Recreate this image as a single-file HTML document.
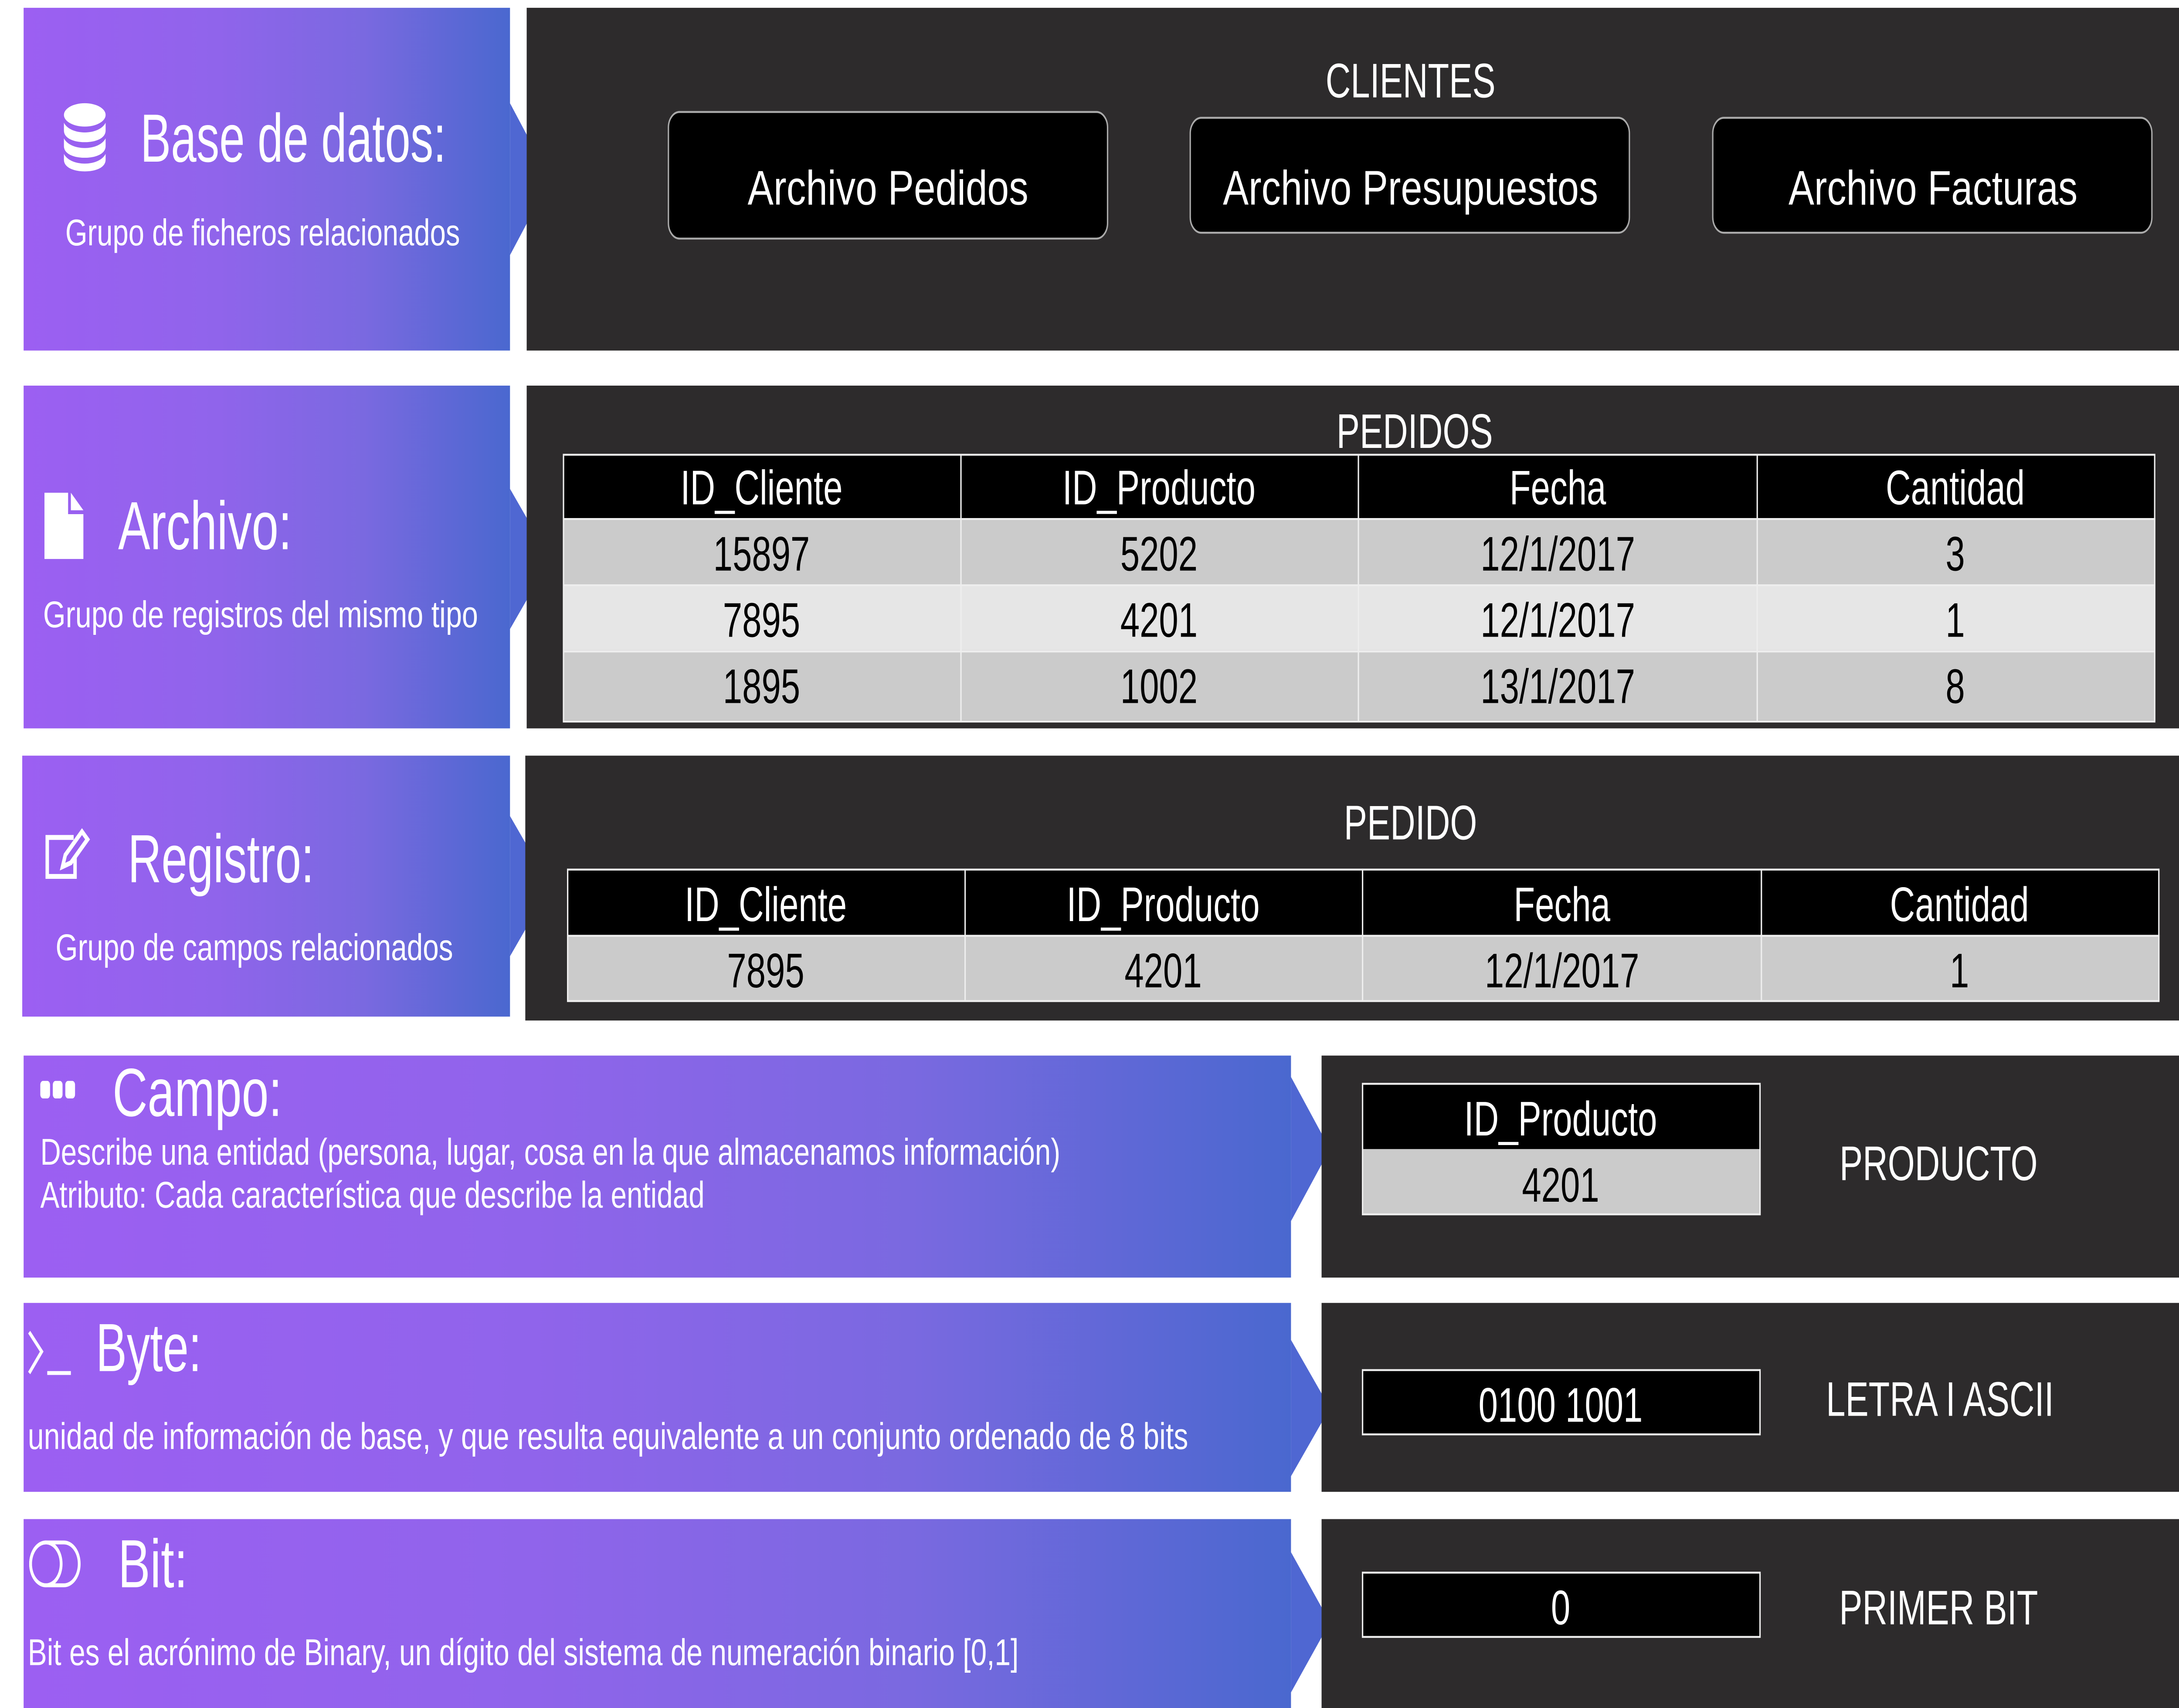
<!DOCTYPE html>
<html><head><meta charset="utf-8"><style>
html,body{margin:0;padding:0;background:#fff;overflow:hidden;width:100vw;height:100vh}
svg{display:block;position:fixed;left:0;top:0;width:100vw;height:100vh}
text{font-family:"Liberation Sans",sans-serif;fill:#fff}
.c{text-anchor:middle;font-size:25px}
.k{fill:#000}
</style></head><body>
<svg viewBox="0 0 1568 877" preserveAspectRatio="none" xmlns="http://www.w3.org/2000/svg">
<defs>
<linearGradient id="g" x1="0" y1="0" x2="1" y2="0">
<stop offset="0" stop-color="#9c5ff2"/><stop offset="0.4" stop-color="#9064eb"/><stop offset="0.7" stop-color="#7a69e0"/><stop offset="1" stop-color="#4a68cf"/>
</linearGradient>
</defs>
<rect width="1568" height="877" fill="#fff"/>

<!-- Row1 -->
<rect x="17" y="4" width="350" height="176" fill="url(#g)"/>
<polygon points="367,53 396,92 367,131" fill="#4f67d2"/>
<rect x="379" y="4" width="1189" height="176" fill="#2d2b2c"/>
<g fill="#fff"><ellipse cx="61" cy="59" rx="15" ry="6"/><path d="M46 63v4c0 4 7 6 15 6s15-2 15-6v-4c-2 3-8 5-15 5S48 66 46 63z"/><path d="M46 71v4c0 4 7 6 15 6s15-2 15-6v-4c-2 3-8 5-15 5S48 74 46 71z"/><path d="M46 79v3c0 4 7 6 15 6s15-2 15-6v-3c-2 3-8 5-15 5S48 82 46 79z"/></g>
<text x="101" y="83" font-size="35" textLength="220" lengthAdjust="spacingAndGlyphs">Base de datos:</text>
<text x="47" y="126" font-size="19" textLength="284" lengthAdjust="spacingAndGlyphs">Grupo de ficheros relacionados</text>
<text x="1015" y="50" class="c" font-size="24">CLIENTES</text>
<rect x="481" y="57.5" width="316" height="65" rx="8" fill="#000" stroke="#aaa"/>
<text x="639" y="105" class="c" textLength="202" lengthAdjust="spacingAndGlyphs">Archivo Pedidos</text>
<rect x="856.5" y="60.5" width="316" height="59" rx="8" fill="#000" stroke="#aaa"/>
<text x="1015" y="105" class="c" textLength="270" lengthAdjust="spacingAndGlyphs">Archivo Presupuestos</text>
<rect x="1232.5" y="60.5" width="316" height="59" rx="8" fill="#000" stroke="#aaa"/>
<text x="1391" y="105" class="c" textLength="208" lengthAdjust="spacingAndGlyphs">Archivo Facturas</text>

<!-- Row2 -->
<rect x="17" y="198" width="350" height="176" fill="url(#g)"/>
<polygon points="367,251 396,287 367,323" fill="#4f67d2"/>
<rect x="379" y="198" width="1189" height="176" fill="#2d2b2c"/>
<path fill="#fff" d="M32 253h17v11h11v23H32z M51 253l9 9h-9z"/>
<text x="85" y="282" font-size="35" textLength="125" lengthAdjust="spacingAndGlyphs">Archivo:</text>
<text x="31" y="322" font-size="19" textLength="313" lengthAdjust="spacingAndGlyphs">Grupo de registros del mismo tipo</text>
<text x="1018" y="230" class="c" font-size="24">PEDIDOS</text>
<rect x="405" y="233" width="1146" height="33" fill="#000"/>
<rect x="405" y="266" width="1146" height="34" fill="#cbcbcb"/>
<rect x="405" y="300" width="1146" height="34" fill="#e6e6e6"/>
<rect x="405" y="334" width="1146" height="36" fill="#cbcbcb"/>
<g stroke="#eee" stroke-width="1"><path d="M405.5 233v137M691.5 233v137M977.5 233v137M1264.5 233v137M1550.5 233v137M405 233.5h1146M405 266.5h1146M405 300.5h1146M405 334.5h1146M405 370.5h1146"/></g>
<text x="548" y="259" class="c">ID_Cliente</text><text x="834" y="259" class="c">ID_Producto</text><text x="1121" y="259" class="c">Fecha</text><text x="1407" y="259" class="c">Cantidad</text>
<text x="548" y="293" class="c k">15897</text><text x="834" y="293" class="c k">5202</text><text x="1121" y="293" class="c k">12/1/2017</text><text x="1407" y="293" class="c k">3</text>
<text x="548" y="327" class="c k">7895</text><text x="834" y="327" class="c k">4201</text><text x="1121" y="327" class="c k">12/1/2017</text><text x="1407" y="327" class="c k">1</text>
<text x="548" y="361" class="c k">1895</text><text x="834" y="361" class="c k">1002</text><text x="1121" y="361" class="c k">13/1/2017</text><text x="1407" y="361" class="c k">8</text>

<!-- Row3 -->
<rect x="16" y="388" width="351" height="134" fill="url(#g)"/>
<polygon points="367,419 396,455 367,491" fill="#4f67d2"/>
<rect x="378" y="388" width="1190" height="136" fill="#2d2b2c"/>
<g fill="none" stroke="#fff" stroke-width="2.5"><path d="M53 430H34v20h20V440"/><path d="M45 445l2-6 12-12 4 4-12 12z"/></g>
<text x="92" y="453" font-size="35" textLength="134" lengthAdjust="spacingAndGlyphs">Registro:</text>
<text x="40" y="493" font-size="19" textLength="286" lengthAdjust="spacingAndGlyphs">Grupo de campos relacionados</text>
<text x="1015" y="431" class="c" font-size="24">PEDIDO</text>
<rect x="408" y="446" width="1146" height="34" fill="#000"/>
<rect x="408" y="480" width="1146" height="34" fill="#cbcbcb"/>
<g stroke="#eee"><path d="M408.5 446v68M694.5 446v68M980.5 446v68M1267.5 446v68M1553.5 446v68M408 446.5h1146M408 480.5h1146M408 514h1146"/></g>
<text x="551" y="473" class="c">ID_Cliente</text><text x="837" y="473" class="c">ID_Producto</text><text x="1124" y="473" class="c">Fecha</text><text x="1410" y="473" class="c">Cantidad</text>
<text x="551" y="507" class="c k">7895</text><text x="837" y="507" class="c k">4201</text><text x="1124" y="507" class="c k">12/1/2017</text><text x="1410" y="507" class="c k">1</text>

<!-- Row4 -->
<rect x="17" y="542" width="912" height="114" fill="url(#g)"/>
<polygon points="929,553 957,590 929,627" fill="#4f67d2"/>
<rect x="951" y="542" width="617" height="114" fill="#2d2b2c"/>
<g fill="#fff"><rect x="29" y="555" width="7" height="9" rx="2"/><rect x="38" y="555" width="7" height="9" rx="2"/><rect x="47" y="555" width="7" height="9" rx="2"/></g>
<text x="81" y="573" font-size="35" textLength="122" lengthAdjust="spacingAndGlyphs">Campo:</text>
<text x="29" y="598" font-size="19" textLength="734" lengthAdjust="spacingAndGlyphs">Describe una entidad (persona, lugar, cosa en la que almacenamos información)</text>
<text x="29" y="620" font-size="19" textLength="478" lengthAdjust="spacingAndGlyphs">Atributo: Cada característica que describe la entidad</text>
<rect x="980" y="556" width="287" height="34" fill="#000"/>
<rect x="980" y="590" width="287" height="34" fill="#cbcbcb"/>
<rect x="980.5" y="556.5" width="286" height="67" fill="none" stroke="#eee"/>
<text x="1123" y="583" class="c">ID_Producto</text>
<text x="1123" y="617" class="c k">4201</text>
<text x="1395" y="606" class="c">PRODUCTO</text>

<!-- Row5 -->
<rect x="17" y="669" width="912" height="97" fill="url(#g)"/>
<polygon points="929,688 957,723 929,758" fill="#4f67d2"/>
<rect x="951" y="669" width="617" height="97" fill="#2d2b2c"/>
<g fill="none" stroke="#fff" stroke-width="2"><path d="M21 684l9 10-9 11"/><path d="M34 705h17"/></g>
<text x="69" y="704" font-size="35" textLength="76" lengthAdjust="spacingAndGlyphs">Byte:</text>
<text x="20" y="744" font-size="19" textLength="835" lengthAdjust="spacingAndGlyphs">unidad de información de base, y que resulta equivalente a un conjunto ordenado de 8 bits</text>
<rect x="980.5" y="703.5" width="286" height="33" fill="#000" stroke="#eee"/>
<text x="1123" y="730" class="c">0100 1001</text>
<text x="1396" y="727" class="c">LETRA I ASCII</text>

<!-- Row6 -->
<rect x="17" y="780" width="912" height="97" fill="url(#g)"/>
<polygon points="929,797 957,833 929,869" fill="#4f67d2"/>
<rect x="951" y="780" width="617" height="97" fill="#2d2b2c"/>
<g fill="none" stroke="#fff" stroke-width="2"><rect x="22" y="792" width="35" height="22" rx="11"/><circle cx="33" cy="803" r="11"/></g>
<text x="85" y="815" font-size="35" textLength="50" lengthAdjust="spacingAndGlyphs">Bit:</text>
<text x="20" y="855" font-size="19" textLength="713" lengthAdjust="spacingAndGlyphs">Bit es el acrónimo de Binary, un dígito del sistema de numeración binario [0,1]</text>
<rect x="980.5" y="807.5" width="286" height="33" fill="#000" stroke="#eee"/>
<text x="1123" y="834" class="c">0</text>
<text x="1395" y="834" class="c">PRIMER BIT</text>
</svg>
</body></html>
